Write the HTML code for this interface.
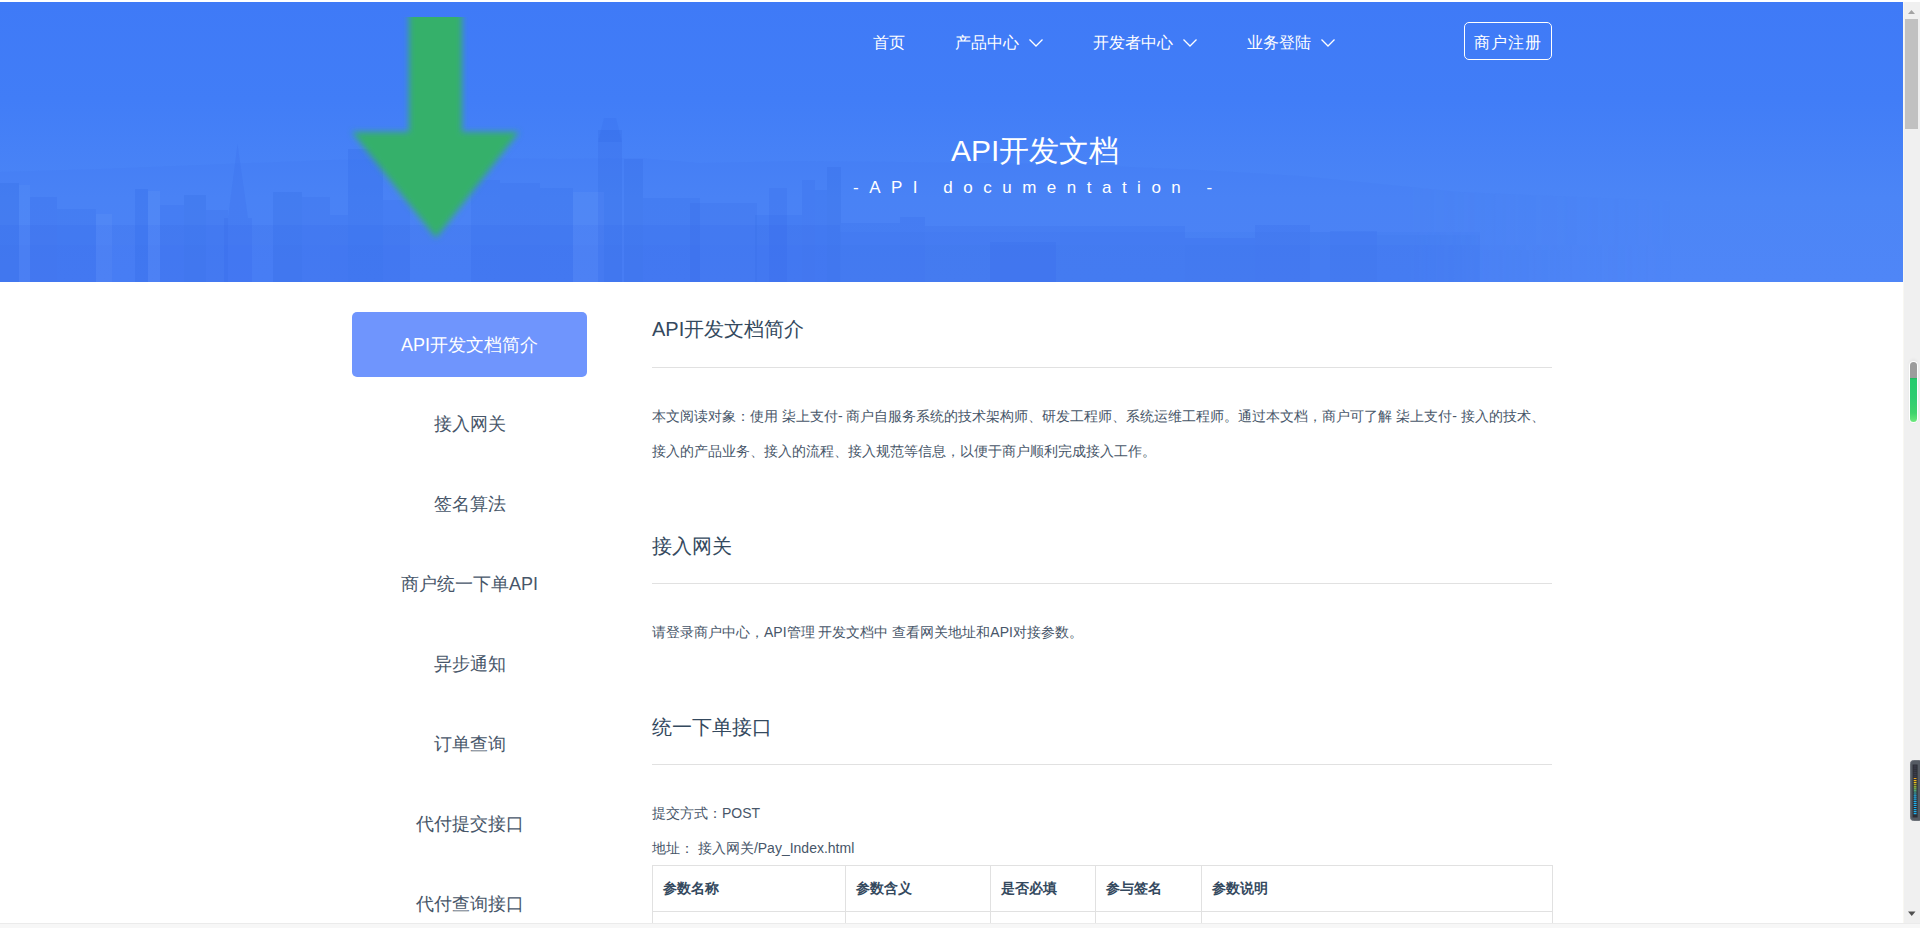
<!DOCTYPE html>
<html><head><meta charset="utf-8">
<style>
html,body{margin:0;padding:0;width:1920px;height:928px;overflow:hidden;background:#fff;font-family:"Liberation Sans",sans-serif;}
.abs{position:absolute;}
#banner{position:absolute;left:0;top:2px;width:1903px;height:280px;background:linear-gradient(180deg,#3f7af7 0%,#417df7 35%,#4b85f6 70%,#4f86f7 100%);overflow:hidden;}
.nav{position:absolute;top:32px;height:22px;line-height:22px;font-size:16px;color:#fff;white-space:nowrap;}
.chev{position:absolute;top:39px;width:14px;height:8px;}
#reg{position:absolute;left:1464px;top:22px;width:86px;height:36px;border:1px solid #fff;border-radius:5px;color:#fff;font-size:16px;line-height:40px;text-align:center;letter-spacing:1px;text-indent:0px;}
#title{position:absolute;left:951px;top:129px;height:44px;line-height:44px;font-size:30px;color:#fff;white-space:nowrap;}
#sub{position:absolute;left:853px;top:176px;height:24px;line-height:24px;font-size:17px;color:#fff;white-space:nowrap;letter-spacing:10.5px;}
.side{position:absolute;left:352px;width:235px;height:65px;line-height:65px;text-align:center;font-size:18px;color:#475669;}
.side.act{background:#6f95fd;color:#fff;border-radius:5px;line-height:67px;}
.h2{position:absolute;left:652px;font-size:20px;color:#34495e;white-space:nowrap;height:30px;line-height:30px;}
.hr{position:absolute;left:652px;width:900px;height:1px;background:#e1e1e1;}
.p{position:absolute;left:652px;font-size:14px;color:#475669;white-space:nowrap;height:35px;line-height:35px;}
table{position:absolute;left:652px;top:865px;border-collapse:collapse;width:900px;}
td,th{border:1px solid #e1e1e1;font-size:14px;color:#34495e;text-align:left;padding:0 0 0 10px;}
th{height:45px;font-weight:bold;}
#sb{position:absolute;left:1903px;top:2px;width:17px;height:921px;background:#f0f0f0;box-shadow:inset 1px 0 0 #f8f7f2;}
#bot{position:absolute;left:0;top:923px;width:1920px;height:5px;background:#f7f7f7;border-top:1px solid #ebebeb;box-sizing:border-box;}
</style></head><body>
<div id="banner">
<svg width="1903" height="280" style="position:absolute;left:0;top:0"><defs><linearGradient id="fg" x1="0" x2="1" y1="0" y2="0"><stop offset="0" stop-color="#fff"/><stop offset="0.74" stop-color="#fff"/><stop offset="0.88" stop-color="#000"/></linearGradient><mask id="mk"><rect width="1903" height="280" fill="url(#fg)"/></mask></defs><g mask="url(#mk)"><path d="M0 170 L100 167 L200 163 L330 158 L450 156 L560 157 L640 156 L700 161 L800 159 L900 160 L1060 162 L1200 168 L1300 174 L1460 190 L1700 200 L1903 205 L1903 280 L0 280 Z" fill="#3a6ff0" fill-opacity="0.10"/><rect x="0" y="181" width="19" height="99" fill="#2a5fe0" fill-opacity="0.180"/><rect x="19" y="183" width="11" height="97" fill="#8fb6ff" fill-opacity="0.072"/><rect x="30" y="195" width="27" height="85" fill="#2a5fe0" fill-opacity="0.162"/><rect x="57" y="207" width="39" height="73" fill="#2a5fe0" fill-opacity="0.144"/><rect x="96" y="212" width="16" height="68" fill="#8fb6ff" fill-opacity="0.090"/><rect x="135" y="187" width="13" height="93" fill="#2a5fe0" fill-opacity="0.198"/><rect x="148" y="189" width="12" height="91" fill="#8fb6ff" fill-opacity="0.090"/><rect x="160" y="203" width="24" height="77" fill="#2a5fe0" fill-opacity="0.126"/><rect x="184" y="193" width="22" height="87" fill="#2a5fe0" fill-opacity="0.180"/><rect x="206" y="208" width="22" height="72" fill="#2a5fe0" fill-opacity="0.135"/><rect x="273" y="190" width="29" height="90" fill="#2a5fe0" fill-opacity="0.180"/><rect x="302" y="195" width="28" height="85" fill="#2a5fe0" fill-opacity="0.135"/><rect x="330" y="213" width="18" height="67" fill="#2a5fe0" fill-opacity="0.126"/><rect x="348" y="147" width="35" height="133" fill="#2a5fe0" fill-opacity="0.198"/><rect x="383" y="198" width="27" height="82" fill="#2a5fe0" fill-opacity="0.126"/><rect x="471" y="178" width="29" height="102" fill="#2a5fe0" fill-opacity="0.144"/><rect x="500" y="181" width="40" height="99" fill="#2a5fe0" fill-opacity="0.162"/><rect x="540" y="186" width="33" height="94" fill="#2a5fe0" fill-opacity="0.144"/><rect x="573" y="190" width="31" height="90" fill="#8fb6ff" fill-opacity="0.090"/><rect x="598" y="128" width="24" height="152" fill="#2a5fe0" fill-opacity="0.180"/><rect x="624" y="157" width="19" height="123" fill="#2a5fe0" fill-opacity="0.180"/><rect x="643" y="196" width="57" height="84" fill="#2a5fe0" fill-opacity="0.144"/><rect x="690" y="201" width="67" height="79" fill="#2a5fe0" fill-opacity="0.135"/><rect x="755" y="213" width="47" height="67" fill="#2a5fe0" fill-opacity="0.126"/><rect x="769" y="186" width="18" height="94" fill="#2a5fe0" fill-opacity="0.162"/><rect x="802" y="178" width="13" height="102" fill="#2a5fe0" fill-opacity="0.162"/><rect x="815" y="188" width="12" height="92" fill="#2a5fe0" fill-opacity="0.144"/><rect x="827" y="165" width="14" height="115" fill="#2a5fe0" fill-opacity="0.180"/><rect x="841" y="221" width="59" height="59" fill="#2a5fe0" fill-opacity="0.144"/><rect x="900" y="215" width="25" height="65" fill="#2a5fe0" fill-opacity="0.162"/><rect x="990" y="240" width="66" height="40" fill="#2a5fe0" fill-opacity="0.108"/><rect x="925" y="224" width="135" height="56" fill="#2a5fe0" fill-opacity="0.135"/><rect x="1060" y="224" width="125" height="56" fill="#2a5fe0" fill-opacity="0.126"/><rect x="1185" y="236" width="70" height="44" fill="#2a5fe0" fill-opacity="0.144"/><rect x="1255" y="223" width="55" height="57" fill="#2a5fe0" fill-opacity="0.162"/><rect x="1310" y="230" width="20" height="50" fill="#2a5fe0" fill-opacity="0.090"/><rect x="1330" y="229" width="47" height="51" fill="#2a5fe0" fill-opacity="0.144"/><rect x="1377" y="233" width="103" height="47" fill="#2a5fe0" fill-opacity="0.072"/><rect x="1480" y="248" width="80" height="32" fill="#2a5fe0" fill-opacity="0.027"/><rect x="0" y="223" width="840" height="57" fill="#2a5fe0" fill-opacity="0.108"/><rect x="0" y="243" width="1903" height="37" fill="#2a5fe0" fill-opacity="0.045"/><rect x="840" y="230" width="640" height="50" fill="#2a5fe0" fill-opacity="0.054"/><path d="M237.5 142 L228 216 L248 216 Z M224 216 L252 216 L252 280 L224 280 Z" fill="#2a5fe0" fill-opacity="0.14"/><path d="M604 116 L616 116 L622 140 L598 140 Z" fill="#2a5fe0" fill-opacity="0.13"/></g></svg>
<svg style="position:absolute;left:0;top:0" width="1903" height="280"><defs><filter id="bl" x="-20%" y="-20%" width="140%" height="140%"><feGaussianBlur stdDeviation="3.4"/></filter><clipPath id="cp"><rect x="0" y="15" width="1903" height="265"/></clipPath></defs><g clip-path="url(#cp)"><path d="M409 0 L462 0 L462 130 L519 130 L436 236 L352 130 L409 130 Z" fill="#36b06a" filter="url(#bl)"/></g></svg>
</div>

<div class="nav" style="left:873px">首页</div>
<div class="nav" style="left:955px">产品中心</div>
<svg class="chev" style="left:1029px" viewBox="0 0 14 8"><path d="M0.5 0.5 L7 7 L13.5 0.5" fill="none" stroke="#fff" stroke-width="1.3"/></svg>
<div class="nav" style="left:1093px">开发者中心</div>
<svg class="chev" style="left:1183px" viewBox="0 0 14 8"><path d="M0.5 0.5 L7 7 L13.5 0.5" fill="none" stroke="#fff" stroke-width="1.3"/></svg>
<div class="nav" style="left:1247px">业务登陆</div>
<svg class="chev" style="left:1321px" viewBox="0 0 14 8"><path d="M0.5 0.5 L7 7 L13.5 0.5" fill="none" stroke="#fff" stroke-width="1.3"/></svg>
<div id="reg">商户注册</div>

<div id="title">API开发文档</div>
<div id="sub">-API documentation -</div>

<div class="side act" style="top:312px">API开发文档简介</div>
<div class="side" style="top:392px">接入网关</div>
<div class="side" style="top:472px">签名算法</div>
<div class="side" style="top:552px">商户统一下单API</div>
<div class="side" style="top:632px">异步通知</div>
<div class="side" style="top:712px">订单查询</div>
<div class="side" style="top:792px">代付提交接口</div>
<div class="side" style="top:872px">代付查询接口</div>

<div class="h2" style="top:314px">API开发文档简介</div>
<div class="hr" style="top:367px"></div>
<div class="p" style="top:399px">本文阅读对象：使用 柒上支付- 商户自服务系统的技术架构师、研发工程师、系统运维工程师。通过本文档，商户可了解 柒上支付- 接入的技术、</div>
<div class="p" style="top:434px">接入的产品业务、接入的流程、接入规范等信息，以便于商户顺利完成接入工作。</div>

<div class="h2" style="top:531px">接入网关</div>
<div class="hr" style="top:583px"></div>
<div class="p" style="top:615px">请登录商户中心，API管理 开发文档中 查看网关地址和API对接参数。</div>

<div class="h2" style="top:712px">统一下单接口</div>
<div class="hr" style="top:764px"></div>
<div class="p" style="top:796px">提交方式：POST</div>
<div class="p" style="top:831px">地址： 接入网关/Pay_Index.html</div>

<table style="table-layout:fixed">
<colgroup><col style="width:193px"><col style="width:145px"><col style="width:105px"><col style="width:106px"><col style="width:351px"></colgroup>
<tr><th>参数名称</th><th>参数含义</th><th>是否必填</th><th>参与签名</th><th>参数说明</th></tr>
<tr><td style="height:40px"></td><td></td><td></td><td></td><td></td></tr>
</table>

<div id="sb">
<svg style="position:absolute;left:5px;top:7px" width="7" height="6"><path d="M0 5 L3.5 1 L7 5 Z" fill="#a3a3a3"/></svg>
<div style="position:absolute;left:2px;top:17px;width:13px;height:110px;background:#c1c1c1"></div>
<div style="position:absolute;left:6px;top:357px;width:9px;height:64px;border-radius:5px;background:rgba(0,0,0,0.04);filter:blur(1px)"></div>
<div style="position:absolute;left:6px;top:359px;width:9px;height:62px;border-radius:5px;background:#fff"></div>
<div style="position:absolute;left:7px;top:360px;width:7px;height:60px;border-radius:4px;overflow:hidden;background:linear-gradient(180deg,#9c9c9c 0,#9c9c9c 26%,#1fae5a 26%,#26cc6e 30%,#2ecc71 60%,#3fd36c 85%,#6ee87e 100%)"></div>
<svg style="position:absolute;left:7px;top:758px" width="10" height="62"><rect x="0.5" y="0.5" width="12" height="60" rx="3" fill="#555b63" stroke="#6c7178" stroke-width="1"/><rect x="2.6" y="4.5" width="5" height="53" fill="#2e3038"/><rect x="3.6" y="5.50" width="3" height="1.2" rx="0.5" fill="#3b3d4a"/><rect x="3.6" y="7.57" width="3" height="1.2" rx="0.5" fill="#3b3d4a"/><rect x="3.6" y="9.64" width="3" height="1.2" rx="0.5" fill="#3b3d4a"/><rect x="3.6" y="11.71" width="3" height="1.2" rx="0.5" fill="#3b3d4a"/><rect x="3.6" y="13.78" width="3" height="1.2" rx="0.5" fill="#3b3d4a"/><rect x="3.6" y="15.85" width="3" height="1.2" rx="0.5" fill="#3b3d4a"/><rect x="3.6" y="17.92" width="3" height="1.2" rx="0.5" fill="#f0a81c"/><rect x="3.6" y="19.99" width="3" height="1.2" rx="0.5" fill="#f2b81e"/><rect x="3.6" y="22.06" width="3" height="1.2" rx="0.5" fill="#f0c820"/><rect x="3.6" y="24.13" width="3" height="1.2" rx="0.5" fill="#d8d428"/><rect x="3.6" y="26.20" width="3" height="1.2" rx="0.5" fill="#b0d438"/><rect x="3.6" y="28.27" width="3" height="1.2" rx="0.5" fill="#80d060"/><rect x="3.6" y="30.34" width="3" height="1.2" rx="0.5" fill="#58cc90"/><rect x="3.6" y="32.41" width="3" height="1.2" rx="0.5" fill="#40c8c0"/><rect x="3.6" y="34.48" width="3" height="1.2" rx="0.5" fill="#28b8e8"/><rect x="3.6" y="36.55" width="3" height="1.2" rx="0.5" fill="#20b4f0"/><rect x="3.6" y="38.62" width="3" height="1.2" rx="0.5" fill="#20b4f0"/><rect x="3.6" y="40.69" width="3" height="1.2" rx="0.5" fill="#20b4f0"/><rect x="3.6" y="42.76" width="3" height="1.2" rx="0.5" fill="#20b4f0"/><rect x="3.6" y="44.83" width="3" height="1.2" rx="0.5" fill="#20b4f0"/><rect x="3.6" y="46.90" width="3" height="1.2" rx="0.5" fill="#20b4f0"/><rect x="3.6" y="48.97" width="3" height="1.2" rx="0.5" fill="#20b4f0"/><rect x="3.6" y="51.04" width="3" height="1.2" rx="0.5" fill="#20b4f0"/><rect x="3.6" y="53.11" width="3" height="1.2" rx="0.5" fill="#20b4f0"/></svg>
<svg style="position:absolute;left:5px;top:909px" width="8" height="6"><path d="M0 0.5 L7.5 0.5 L3.75 5 Z" fill="#505050"/></svg>
</div>
<div id="bot"></div>
</body></html>
